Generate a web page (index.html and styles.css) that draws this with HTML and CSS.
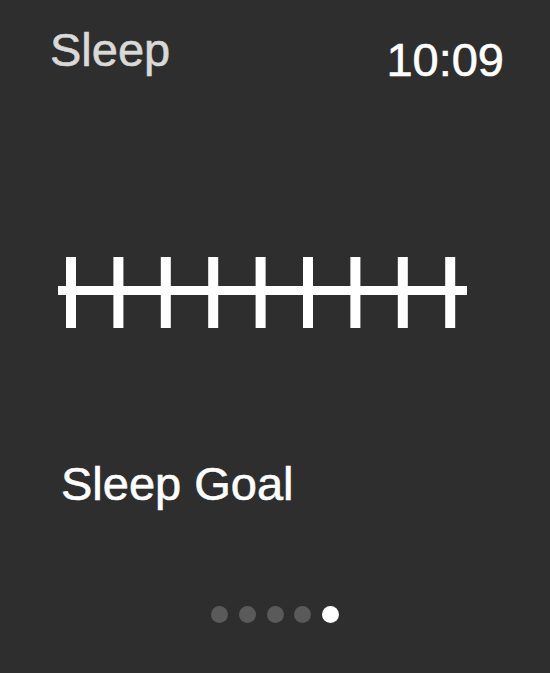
FILE: index.html
```html
<!DOCTYPE html>
<html lang="en">
<head>
    <meta charset="UTF-8">
    <meta name="viewport" content="width=device-width, initial-scale=1.0">
    <title>Sleep</title>
    <link rel="stylesheet" href="styles.css">
</head>
<body>
    <div class="screen">
        <header class="top-bar">
            <span class="app-title">Sleep</span>
            <span class="clock">10:09</span>
        </header>

        <div class="ruler">
            <svg width="410" height="71" viewBox="0 0 410 71">
                <g fill="#fff">
                    <rect x="8" y="0" width="10" height="71"/>
                    <rect x="55.4" y="0" width="10" height="71"/>
                    <rect x="102.8" y="0" width="10" height="71"/>
                    <rect x="150.2" y="0" width="10" height="71"/>
                    <rect x="197.6" y="0" width="10" height="71"/>
                    <rect x="245" y="0" width="10" height="71"/>
                    <rect x="292.4" y="0" width="10" height="71"/>
                    <rect x="339.8" y="0" width="10" height="71"/>
                    <rect x="387.2" y="0" width="10" height="71"/>
                    <rect x="0" y="29" width="409" height="9"/>
                </g>
            </svg>
        </div>

        <h2 class="goal-label">Sleep Goal</h2>

        <div class="pager">
            <span class="dot"></span>
            <span class="dot"></span>
            <span class="dot"></span>
            <span class="dot"></span>
            <span class="dot active"></span>
        </div>
    </div>
</body>
</html>
```

FILE: styles.css
```css
body {
    margin: 0;
    background-color: #2e2e2e;
    font-family: "Liberation Sans", Arial, sans-serif;
    color: #fff;
}
.screen {
    width: 550px;
    height: 673px;
    overflow: hidden;
}
.top-bar {
    display: flex;
    justify-content: space-between;
    align-items: flex-start;
    padding: 23px 46px 0 50px;
    font-size: 47px;
    line-height: 53px;
    -webkit-text-stroke: 0.6px currentColor;
}
.app-title {
    color: #d9d9d9;
}
.clock {
    margin-top: 10px;
    color: #fff;
}
.ruler {
    margin-top: 171px;
    padding-left: 58px;
    height: 71px;
}
.ruler svg {
    display: block;
}
.goal-label {
    margin: 129px 0 0 0;
    padding-left: 61px;
    font-size: 47px;
    font-weight: normal;
    line-height: 53px;
    -webkit-text-stroke: 0.6px currentColor;
}
.pager {
    display: flex;
    justify-content: center;
    gap: 10.75px;
    margin-top: 96px;
}
.dot {
    width: 17px;
    height: 17px;
    border-radius: 50%;
    background-color: #5a5a5a;
}
.dot.active {
    background-color: #fff;
}
```
